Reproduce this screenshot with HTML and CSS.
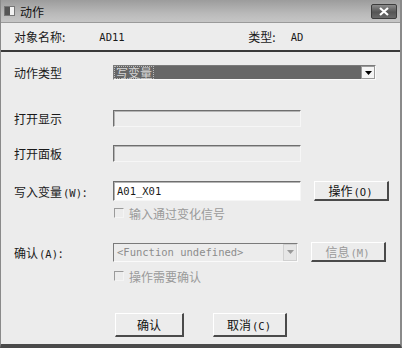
FILE: index.html
```html
<!DOCTYPE html>
<html lang="zh-CN">
<head>
    <meta charset="UTF-8">
    <title>动作</title>
    <link rel="stylesheet" href="styles.css">
</head>
<body>
    <div class="window">
        <!-- Title bar -->
        <div class="titlebar">
            <span class="app-icon"><span></span></span>
            <span class="title">动作</span>
            <span class="close">
                <svg width="12" height="9" viewBox="0 0 12 9">
                    <path d="M2 1 L10 8 M10 1 L2 8" stroke="#fff" stroke-width="2.2"/>
                </svg>
            </span>
        </div>

        <!-- Object info -->
        <div class="info">
            <span class="info-label">对象名称:</span>
            <span class="mono info-name">AD11</span>
            <span class="info-label">类型:</span>
            <span class="mono info-type">AD</span>
        </div>

        <!-- Form -->
        <div class="form">
            <div class="row row-type">
                <span class="label">动作类型</span>
                <div class="select active">
                    <span class="select-text">写变量</span>
                    <span class="drop">
                        <svg width="7" height="4" viewBox="0 0 7 4"><path d="M0 0 H7 L3.5 4 Z" fill="#000"/></svg>
                    </span>
                </div>
            </div>

            <div class="row row-display">
                <span class="label">打开显示</span>
                <div class="field disabled"></div>
            </div>

            <div class="row row-panel">
                <span class="label">打开面板</span>
                <div class="field disabled"></div>
            </div>

            <div class="row row-write">
                <span class="label">写入变量<span class="key">(W)</span>:</span>
                <div class="field white mono">A01_X01</div>
                <button class="btn side">操作<span class="key">(O)</span></button>
            </div>

            <div class="row row-check1">
                <span class="label"></span>
                <span class="check"></span>
                <span class="check-text">输入通过变化信号</span>
            </div>

            <div class="row row-confirm">
                <span class="label">确认<span class="key">(A)</span>:</span>
                <div class="select short disabled">
                    <span class="select-text mono">&lt;Function undefined&gt;</span>
                    <span class="drop grey">
                        <svg width="7" height="4" viewBox="0 0 7 4"><path d="M0 0 H7 L3.5 4 Z" fill="#999"/></svg>
                    </span>
                </div>
                <button class="btn side off">信息<span class="key">(M)</span></button>
            </div>

            <div class="row row-check2">
                <span class="label"></span>
                <span class="check"></span>
                <span class="check-text">操作需要确认</span>
            </div>

            <div class="actions">
                <button class="btn ok">确认</button>
                <button class="btn cancel">取消<span class="key">(C)</span></button>
            </div>
        </div>
    </div>
</body>
</html>
```

FILE: styles.css
```css
/* Page */
body {
    margin: 0;
    font-family: "Noto Sans CJK SC", "DejaVu Sans", sans-serif;
    font-size: 12px;
    color: #1a1a1a;
    background: #ececec;
}

.mono {
    font-family: "DejaVu Sans Mono", "Liberation Mono", monospace;
    font-size: 10.5px;
}

/* narrow accelerator text like (W) */
.key {
    font-family: "DejaVu Sans Mono", monospace;
    font-size: 10.5px;
    margin: 0 1px;
}

/* Window frame */
.window {
    width: 402px;
    height: 348px;
    box-sizing: border-box;
    background: #ececec;
    border-left: 1px solid #8a8a8a;
    border-right: 2px solid #8a8a8a;
    border-bottom: 4px solid #4a4a4a;
    display: flex;
    flex-direction: column;
}

/* Title bar */
.titlebar {
    height: 22px;
    display: flex;
    align-items: center;
    background: linear-gradient(to bottom, #9c9c9c, #b9b9b9 60%, #c6c6c6);
    border-bottom: 1px solid #9a9a9a;
}

.app-icon {
    width: 11px;
    height: 10px;
    margin-left: 3px;
    background: #f2f2f2;
    border: 1px solid #777;
    box-sizing: border-box;
    display: flex;
}

.app-icon span {
    width: 5px;
    background: #555;
}

.title {
    margin-left: 5px;
    font-size: 12px;
    color: #111;
}

.close {
    margin-left: auto;
    margin-right: 3px;
    width: 26px;
    height: 15px;
    box-sizing: border-box;
    border: 1px solid #3c3c3c;
    border-radius: 2px;
    background: linear-gradient(to bottom, #8c8c8c, #555 55%, #6a6a6a);
    display: flex;
    align-items: center;
    justify-content: center;
}

/* Object info row */
.info {
    height: 27px;
    display: flex;
    align-items: center;
    padding-left: 13px;
    border-bottom: 2px solid #3a3a3a;
}

.info-name {
    width: 149px;
    margin-left: 34px;
}

.info-type {
    margin-left: 15px;
}

/* Form rows */
.form {
    display: flex;
    flex-direction: column;
}

.row {
    display: flex;
    align-items: center;
}

.label {
    width: 99px;
    padding-left: 13px;
    flex-shrink: 0;
}

.row-type { margin-top: 13px; height: 15px; }
.row-display { margin-top: 30px; height: 17px; }
.row-panel { margin-top: 18px; height: 17px; }
.row-write { margin-top: 19px; height: 20px; }
.row-check1 { margin-top: 4px; height: 16px; }
.row-confirm { margin-top: 21px; height: 20px; }
.row-check2 { margin-top: 6px; height: 16px; }

/* Inputs */
.field {
    width: 188px;
    height: 17px;
    box-sizing: border-box;
    border-top: 1px solid #6e6e6e;
    border-left: 1px solid #6e6e6e;
    border-right: 1px solid #f6f6f6;
    border-bottom: 1px solid #f6f6f6;
    box-shadow: inset 1px 1px 0 #b4b4b4;
    padding-left: 3px;
    display: flex;
    align-items: center;
}

.field.white {
    height: 20px;
    background: #fff;
}

/* Selects */
.select {
    width: 263px;
    height: 15px;
    box-sizing: border-box;
    border-top: 1px solid #7a7a7a;
    border-left: 1px solid #7a7a7a;
    border-right: 1px solid #fafafa;
    border-bottom: 1px solid #fafafa;
    display: flex;
    align-items: center;
}

.select.active {
    background: #676767;
}

.select.active .select-text {
    color: #d6d6d6;
    outline: 1px dotted #bbb;
    outline-offset: -1px;
    padding: 0 2px;
    line-height: 13px;
}

.select.short {
    width: 185px;
    height: 19px;
    background: #ececec;
}

.select.short .select-text {
    color: #8c8c8c;
    padding-left: 3px;
}

.drop {
    margin-left: auto;
    width: 14px;
    height: 13px;
    box-sizing: border-box;
    background: #f4f4f4;
    border: 1px solid #999;
    display: flex;
    align-items: center;
    justify-content: center;
}

.drop.grey {
    height: 17px;
    background: #e6e6e6;
    border-color: #d0d0d0;
}

/* Buttons */
.btn {
    font-family: "Noto Sans CJK SC", "DejaVu Sans", sans-serif;
    font-size: 12px;
    color: #111;
    background: #ececec;
    border-top: 1px solid #fff;
    border-left: 1px solid #fff;
    border-right: 2px solid #4a4a4a;
    border-bottom: 2px solid #4a4a4a;
    padding: 0;
    box-sizing: border-box;
}

.btn.side {
    width: 75px;
    height: 20px;
    margin-left: 13px;
}

.btn.off {
    color: #9a9a9a;
}

/* Checkboxes */
.check {
    width: 10px;
    height: 10px;
    margin-left: 1px;
    box-sizing: border-box;
    border-top: 1px solid #9a9a9a;
    border-left: 1px solid #9a9a9a;
    border-right: 1px solid #f4f4f4;
    border-bottom: 1px solid #f4f4f4;
}

.check-text {
    margin-left: 5px;
    color: #9a9a9a;
}

/* Bottom actions */
.actions {
    margin-top: 29px;
    padding-left: 114px;
    display: flex;
    gap: 29px;
}

.btn.ok {
    width: 69px;
    height: 24px;
}

.btn.cancel {
    width: 74px;
    height: 24px;
}
```
